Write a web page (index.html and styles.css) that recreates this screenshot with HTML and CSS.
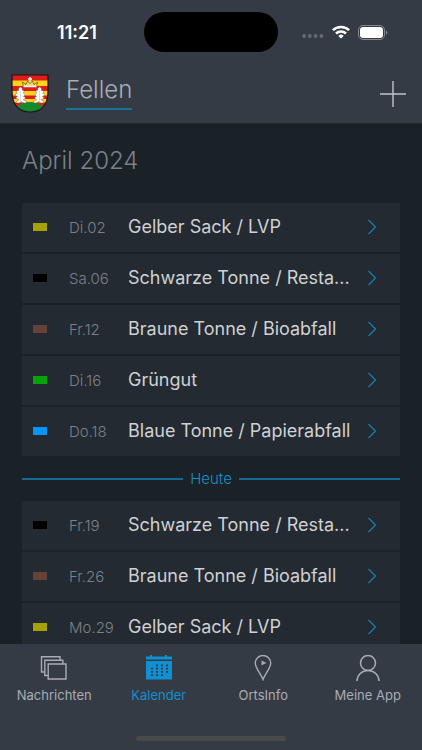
FILE: index.html
```html
<!DOCTYPE html>
<html lang="de">
  <head>
    <meta charset="utf-8">
    <meta name="viewport" content="width=device-width, initial-scale=1">
    <title>Fellen</title>
    <link rel="stylesheet" href="styles.css">
  </head>
  <body>
    <svg class="defs" aria-hidden="true">
      <symbol id="chevron" viewBox="0 0 10 16">
        <path d="M1.500 1l7 7-7 7" fill="none" stroke="currentColor" stroke-width="1.2"/>
      </symbol>
    </svg>

    <header class="header">
      <div class="status">
        <span class="time">11:21</span>
        <span class="island"></span>
        <div class="signals">
          <svg width="22" height="4" viewBox="0 0 22 4" fill="#666a71">
            <circle cx="2" cy="2" r="1.9"/><circle cx="7.8" cy="2" r="1.9"/><circle cx="13.6" cy="2" r="1.9"/><circle cx="19.4" cy="2" r="1.9"/>
          </svg>
          <svg class="wifi" width="18" height="14" viewBox="0 0 18 14" fill="none" stroke="#fff" stroke-width="2.5">
            <path d="M.9 5.2a11.6 11.6 0 0 1 16.2 0"/>
            <path d="M4 8.5a7.2 7.2 0 0 1 10 0"/>
            <path d="M9 13.6l-2.6-2.7a3.7 3.7 0 0 1 5.2 0z" fill="#fff" stroke="none"/>
          </svg>
          <svg width="30" height="15" viewBox="0 0 30 15">
            <rect x=".5" y=".5" width="26" height="14" rx="4.5" fill="none" stroke="#85888d"/>
            <rect x="2" y="2" width="23" height="11" rx="3.2" fill="#fff"/>
            <path d="M28 5.2v4.6c1.8-.8 1.8-3.8 0-4.6z" fill="#85888d"/>
          </svg>
        </div>
      </div>
      <div class="bar">
        <svg class="crest" viewBox="0 0 38 39">
          <clipPath id="shield"><path d="M1 1h36v16c0 13-6 21-18 21S1 30 1 17z"/></clipPath>
          <g clip-path="url(#shield)">
            <path fill="#e01b18" d="M0 0h38v39H0z"/>
            <path fill="#ffd51c" d="M0 6.500h38v5.500H0zM0 17h38v4.500H0zM0 25h38v3.500H0z"/>
            <path fill="#168a2b" d="M0 35c7-1 9-7 19-7s12 6 19 7v4H0z"/>
          </g>
          <path d="M12.500 13l-1-5 3.500 2.500 1.500-3.500 2.500 2.500 2.500-2.500 1.500 3.500 3.500-2.500-1 5z" fill="#f1d978" stroke="#5a4820" stroke-width=".7"/>
          <path d="M19 3v5M17 5h4M12.500 12.500h13" stroke="#fff" stroke-width="1.300"/>
          <g fill="#fff" stroke="#5b4a3e" stroke-width=".4">
            <path d="M9.500 13c2 1 2.200 2 1.700 3.300 2.400-.3 2.400 1.700.8 2.800 2.600-.1 2.600 2 .5 3.300 2.600.4 2.200 2.600-.3 3.400 1 1.200 3 .5 3.800 2.200-1.500 1.500-4 1-5.500-.5-2 1.800-4.500 2-5.500.8.500-1.800 2.600-1.400 3-2.800C5 25 4.200 23 6.500 22.400 4 21.500 3.600 19.500 6.300 19.400 4.700 17.800 5.200 16 7.700 16.500 7 15 7.600 13.600 9.500 13z"/>
            <path d="M28.500 13c-2 1-2.200 2-1.700 3.300-2.400-.3-2.400 1.700-.8 2.800-2.600-.1-2.600 2-.5 3.300-2.600.4-2.200 2.600.3 3.400-1 1.200-3 .5-3.800 2.200 1.500 1.500 4 1 5.500-.5 2 1.800 4.500 2 5.500.8-.5-1.800-2.600-1.400-3-2.800 3-.5 3.800-2.500 1.500-3.100 2.500-.9 2.900-2.900.2-3 1.600-1.600 1.100-3.400-1.400-2.900.7-1.500.1-2.900-1.800-3.500z"/>
          </g>
          <path d="M9.500 17v11M28.500 17v11" stroke="#bbb" stroke-width=".5"/>
          <path d="M1 1h36v16c0 13-6 21-18 21S1 30 1 17z" fill="none" stroke="#15171a" stroke-width="1.200"/>
        </svg>
        <a class="place" href="#">Fellen</a>
        <button class="add" type="button" aria-label="Hinzufügen">
          <svg width="26" height="26" viewBox="0 0 26 26" stroke="currentColor" stroke-width="1.400"><path d="M0 13h26M13 0v26"/></svg>
        </button>
      </div>
    </header>

    <main class="content">
      <h1 class="month">April 2024</h1>
      <ul class="events">
        <li><a class="event" href="#"><i class="bin yellow"></i><span class="date">Di.02</span><span class="name">Gelber Sack / LVP</span><svg class="chevron"><use href="#chevron"/></svg></a></li>
        <li><a class="event" href="#"><i class="bin black"></i><span class="date">Sa.06</span><span class="name">Schwarze Tonne / Resta...</span><svg class="chevron"><use href="#chevron"/></svg></a></li>
        <li><a class="event" href="#"><i class="bin brown"></i><span class="date">Fr.12</span><span class="name">Braune Tonne / Bioabfall</span><svg class="chevron"><use href="#chevron"/></svg></a></li>
        <li><a class="event" href="#"><i class="bin green"></i><span class="date">Di.16</span><span class="name">Grüngut</span><svg class="chevron"><use href="#chevron"/></svg></a></li>
        <li><a class="event" href="#"><i class="bin blue"></i><span class="date">Do.18</span><span class="name">Blaue Tonne / Papierabfall</span><svg class="chevron"><use href="#chevron"/></svg></a></li>
      </ul>
      <div class="today">Heute</div>
      <ul class="events">
        <li><a class="event" href="#"><i class="bin black"></i><span class="date">Fr.19</span><span class="name">Schwarze Tonne / Resta...</span><svg class="chevron"><use href="#chevron"/></svg></a></li>
        <li><a class="event" href="#"><i class="bin brown"></i><span class="date">Fr.26</span><span class="name">Braune Tonne / Bioabfall</span><svg class="chevron"><use href="#chevron"/></svg></a></li>
        <li><a class="event" href="#"><i class="bin yellow"></i><span class="date">Mo.29</span><span class="name">Gelber Sack / LVP</span><svg class="chevron"><use href="#chevron"/></svg></a></li>
      </ul>
    </main>

    <footer class="footer">
      <nav class="tabs">
        <a class="tab" href="#">
          <svg width="28" height="26" viewBox="0 0 28 26" fill="none" stroke="currentColor" stroke-width="1.400">
            <path d="M8.200 9h17.800v15H8.200z"/>
            <path d="M8 20.500H4.800V5.200h18V9M4.800 17H1.500V1.800H20v3.400"/>
          </svg>
          Nachrichten
        </a>
        <a class="tab active" href="#">
          <svg width="28" height="26" viewBox="0 0 28 26" fill="currentColor">
            <path d="M1 1.500h26v3H1zM5 0h2v2H5zM20 0h2v2h-2zM1 6h26v18.500H1z"/>
            <path d="M11 10.300h12M6 13.600h17M6 16.900h17M6 20.200h12" stroke="#353b44" stroke-width="1.800" stroke-dasharray="2 3"/>
          </svg>
          Kalender
        </a>
        <a class="tab" href="#">
          <svg width="28" height="26" viewBox="0 0 28 26" fill="none" stroke="currentColor" stroke-width="1.400">
            <path d="M14 24.500C12 19 6.300 13 6.300 8.200a7.700 7.700 0 0 1 15.400 0C21.700 13 16 19 14 24.500z"/>
            <path d="M12.500 5.500v4.800l5-2.400z" fill="currentColor" stroke="none"/>
          </svg>
          OrtsInfo
        </a>
        <a class="tab" href="#">
          <svg width="28" height="26" viewBox="0 0 28 26" fill="none" stroke="currentColor" stroke-width="1.500">
            <circle cx="14" cy="8" r="7.500"/>
            <path d="M3 26c0-6 5-10.500 11-10.500S25 20 25 26"/>
          </svg>
          Meine App
        </a>
      </nav>
      <div class="home"></div>
    </footer>
  </body>
</html>
```

FILE: styles.css
```css
* { box-sizing: border-box; }
body { margin: 0; height: 100vh; display: flex; flex-direction: column; background: #1a2127; color: #cfd1d3; font-family: Inter, "Liberation Sans", sans-serif; overflow: hidden; }
a { color: inherit; text-decoration: none; }
.defs { display: none; }

.header { background: #353b44; border-bottom: 1px solid #20262e; }
.status { display: grid; grid-template-columns: 1fr auto 1fr; align-items: center; height: 64px; }
.time { color: #fff; font-size: 18px; font-weight: 600; text-align: center; padding-left: 10px; }
.island { width: 134px; height: 40px; border-radius: 20px; background: #000; }
.signals { display: flex; align-items: center; gap: 8px; padding-left: 24px; }
.signals svg:first-child { margin-top: 8px; }
.bar { display: flex; align-items: center; height: 59px; padding: 0 16px 0 11px; }
.crest { width: 38px; height: 39px; }
.place { margin: 0 0 3px 17px; padding-bottom: 2px; font-size: 24px; line-height: 32px; font-weight: 300; color: #a9acb4; border-bottom: 2px solid #1c719b; }
.add { margin-left: auto; padding: 0; border: none; background: none; color: #c2c4c9; }
.add svg { display: block; }

.content { flex: 1; min-height: 0; overflow: hidden; padding: 0 22px; }
.month { margin: 20px 0 25px; font-size: 24px; line-height: 34px; font-weight: 300; color: #7c8187; }
.events { list-style: none; margin: 0; padding: 0; display: flex; flex-direction: column; gap: 2px; }
.event { display: flex; align-items: center; height: 49px; padding: 0 23px 1px 11px; background: #232a31; }
.bin { width: 14px; height: 8px; }
.yellow { background: #a5a306; }
.black { background: #000; }
.brown { background: #654137; }
.green { background: #07a30a; }
.blue { background: #0894fb; }
.date { width: 59px; margin-left: 22px; font-size: 15px; font-weight: 300; color: #7c8187; }
.name { flex: 1; min-width: 0; font-size: 18px; line-height: 24px; white-space: nowrap; }
.chevron { width: 10px; height: 16px; color: #1681b5; }

.today { display: flex; align-items: center; gap: 7px; height: 45px; color: #1691ca; font-size: 15px; font-weight: 300; }
.today::before, .today::after { content: ""; flex: 1; height: 2px; background: #156a94; }

.footer { background: #353b44; height: 106px; display: flex; flex-direction: column; justify-content: space-between; align-items: center; padding: 11px 2px 9px; }
.tabs { display: flex; width: 100%; }
.tab { flex: 1; display: flex; flex-direction: column; align-items: center; gap: 5px; font-size: 13px; line-height: 18px; color: #a9acb4; }
.active { color: #0e90d2; }
.home { width: 150px; height: 5px; border-radius: 3px; background: #4a4a4b; }
```
